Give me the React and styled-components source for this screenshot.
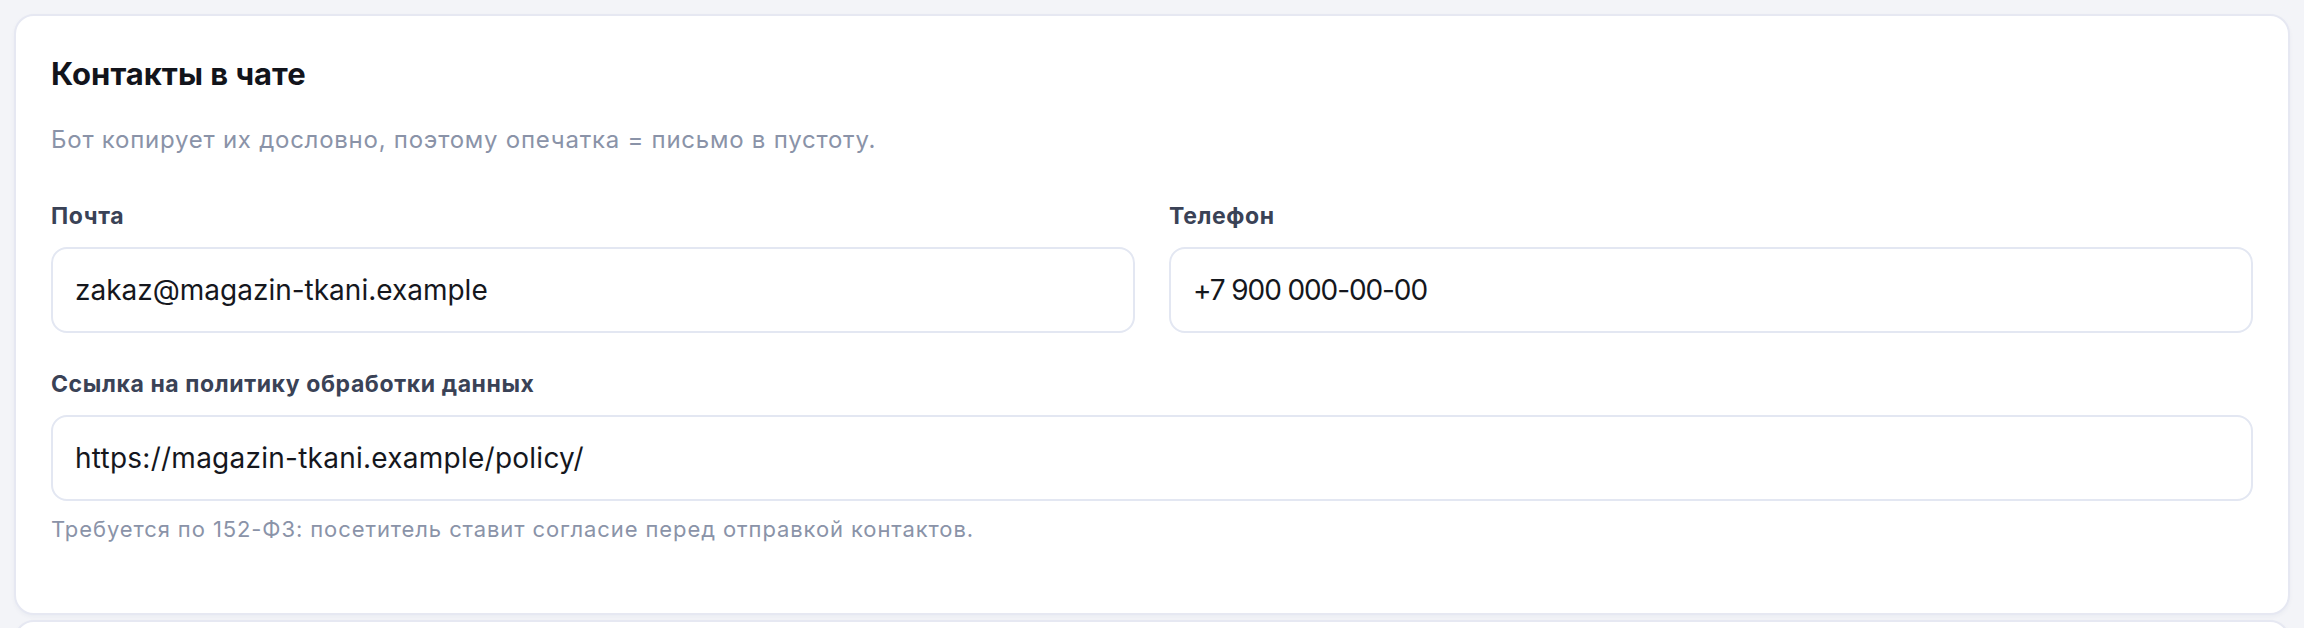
import React from 'react';
import styled, { createGlobalStyle } from 'styled-components';

const GlobalStyle = createGlobalStyle`
  * { box-sizing: border-box; }
  body {
    margin: 0;
    background: #f3f4f8;
    font-family: Inter, "Noto Sans", "Liberation Sans", sans-serif;
  }
`;

const Page = styled.div`
  padding: 14px 14px 0;
  display: flex;
  flex-direction: column;
  gap: 5px;
`;

const Card = styled.section`
  background: #ffffff;
  border: 2px solid #e6e8f2;
  border-radius: 20px;
  box-shadow: 0 2px 4px rgba(30, 40, 90, 0.04);
  padding: 39px 35px 69px;
  display: flex;
  flex-direction: column;
  min-height: ${(p) => p.$minHeight || 0}px;
`;

const Title = styled.h2`
  margin: 0;
  font-size: 31px;
  line-height: 38px;
  font-weight: 700;
  color: #12141b;
`;

const Lead = styled.p`
  margin: 31px 0 0;
  font-size: 24px;
  line-height: 32px;
  letter-spacing: 0.75px;
  color: #8a93a8;
`;

const Row = styled.div`
  display: grid;
  grid-template-columns: 1fr 1fr;
  column-gap: 34px;
  margin-top: ${(p) => p.$top}px;
`;

const Field = styled.div`
  display: flex;
  flex-direction: column;
  gap: 16px;
  margin-top: ${(p) => p.$top || 0}px;
`;

const Label = styled.label`
  font-size: 23px;
  line-height: 30px;
  font-weight: 700;
  letter-spacing: 0.6px;
  color: #3a4256;
`;

const Input = styled.input`
  height: 86px;
  width: 100%;
  border: 2px solid #e3e7f2;
  border-radius: 16px;
  background: #ffffff;
  padding: 0 22px;
  font-family: inherit;
  font-size: 28px;
  letter-spacing: ${(p) => p.$tracking || 0}px;
  color: #15171d;
  outline: none;
`;

const Hint = styled.p`
  margin: 13px 0 0;
  font-size: 22px;
  line-height: 30px;
  letter-spacing: 0.9px;
  color: #8a93a8;
`;

export default function App() {
  return (
    <>
      <GlobalStyle />
      <Page>
        <Card>
          <Title>Контакты в чате</Title>
          <Lead>Бот копирует их дословно, поэтому опечатка = письмо в пустоту.</Lead>
          <Row $top={45}>
            <Field>
              <Label>Почта</Label>
              <Input readOnly value="zakaz@magazin-tkani.example" />
            </Field>
            <Field>
              <Label>Телефон</Label>
              <Input readOnly value="+7 900 000-00-00" $tracking={-1.1} />
            </Field>
          </Row>
          <Field $top={36}>
            <Label>Ссылка на политику обработки данных</Label>
            <Input readOnly value="https://magazin-tkani.example/policy/" $tracking={0.25} />
          </Field>
          <Hint>Требуется по 152-ФЗ: посетитель ставит согласие перед отправкой контактов.</Hint>
        </Card>
        <Card $minHeight={200} />
      </Page>
    </>
  );
}
